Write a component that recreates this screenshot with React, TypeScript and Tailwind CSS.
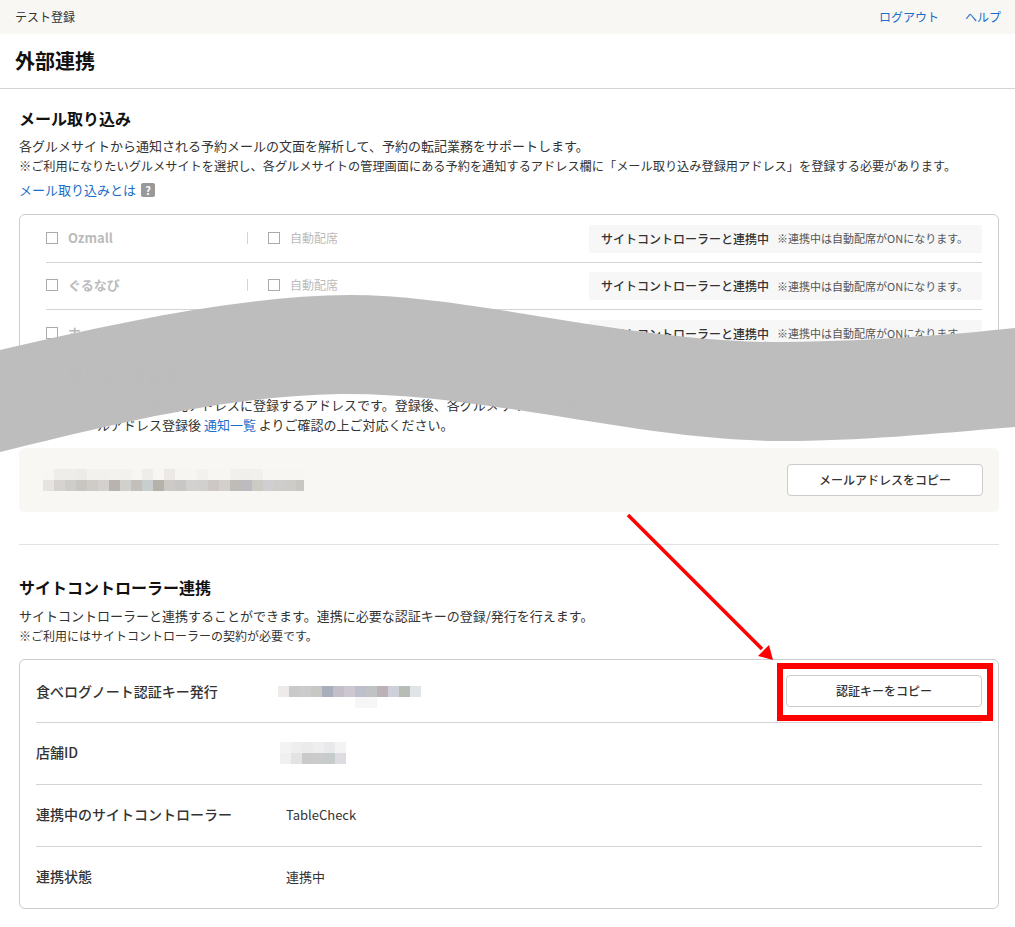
import type { ReactNode } from 'react'

const siteRows = ['Ozmall', 'ぐるなび', 'ホットペッパー']

const mailMosaic = [
  ['#f7f6f3', '#efedea', '#efedea', '#edebe7', '#f2f1ee', '#f2f1ee', '#f3f2ef', '#f2f1ee', '#f7f6f3', '#eeede9', '#f7f6f3', '#ebe8e5', '#f6f5f2', '#f6f5f2', '#f2f1ee', '#f7f6f3', '#f7f6f3', '#f2f0ed', '#f1efec', '#f1f0ed', '#f7f6f3', '#f7f6f3', '#f7f6f3', '#f7f6f3'],
  ['#e6e4e1', '#d6d3d0', '#cfcdca', '#c9c5c1', '#cdccc7', '#d4d0cf', '#b8b3ae', '#d2d0cc', '#c3bfba', '#c9cdce', '#b5b1ab', '#cdc9c6', '#c9c7c6', '#d3d0ce', '#d2cfcf', '#cdc8c5', '#d3cfcd', '#bfbcb8', '#bdbbc0', '#cbcac5', '#d0ced0', '#cfcdcb', '#cdccc8', '#c8c8c3'],
]
const keyMosaic = [
  ['#eeeaea', '#c9c9c9', '#cccccc', '#c7c8c3', '#a9aebb', '#c3bec8', '#cbc8cf', '#bebfcc', '#c1c2c3', '#bcb1b6', '#cdd0d9', '#b7bcb6', '#e0e4e7'],
  ['#ffffff', '#ffffff', '#ffffff', '#ffffff', '#ffffff', '#ffffff', '#ffffff', '#f6f6f6', '#f6f6f6', '#ffffff', '#ffffff', '#ffffff', '#ffffff'],
]
const shopMosaic = [
  ['#f3f3f3', '#eeeeee', '#ebebeb', '#eeeeee', '#e9e9eb', '#f3f3f3'],
  ['#f0f0f0', '#e3e3e3', '#cbcacb', '#cbcbcb', '#c5cccb', '#dedce1'],
]

function Mosaic({ rows }: { rows: string[][] }) {
  return (
    <div className="flex flex-col">
      {rows.map((row, i) => (
        <div key={i} className="flex">
          {row.map((color, j) => (
            <div key={j} className="w-[11px] h-[11px] shrink-0" style={{ backgroundColor: color }} />
          ))}
        </div>
      ))}
    </div>
  )
}

function Checkbox() {
  return <span className="block w-[12px] h-[12px] border border-[#aaaaaa] bg-white shrink-0" />
}

function CopyButton({ label }: { label: string }) {
  return (
    <button className="w-[196px] h-[32px] bg-white border border-[#cccccc] rounded-[4px] text-[12px] font-medium text-[#333333]">
      {label}
    </button>
  )
}

function KeyRow({ label, className, children }: { label: string; className: string; children: ReactNode }) {
  return (
    <div className={className}>
      <div className="w-[242px] text-[14px] font-medium text-[#333333]">{label}</div>
      <div className="flex-1 flex items-center justify-between text-[13px] text-[#333333]">{children}</div>
    </div>
  )
}

export default function App() {
  return (
    <div className="relative min-h-[927px] bg-white overflow-hidden font-['Noto_Sans_CJK_JP','Noto_Sans',sans-serif] text-[#333333]">
      <header className="h-[34px] bg-[#f8f7f4] flex items-center justify-between pl-[15px] pr-[14px] text-[12px]">
        <span>テスト登録</span>
        <nav className="flex gap-[26px] text-[#1a6fc9]">
          <a>ログアウト</a>
          <a>ヘルプ</a>
        </nav>
      </header>

      <div className="h-[55px] flex items-center pl-[15px] border-b border-[#d4d4d4]">
        <h1 className="text-[20px] leading-[28px] font-bold text-[#111111]">外部連携</h1>
      </div>

      <main className="pl-[19px] pr-[16px] pt-[19px] pb-[18px]">
        {/* Mail import */}
        <section>
          <h2 className="text-[16px] leading-[20px] font-bold text-[#111111]">メール取り込み</h2>
          <p className="mt-[8px] text-[13px] leading-[20px]">
            各グルメサイトから通知される予約メールの文面を解析して、予約の転記業務をサポートします。
            <br />
            <span className="text-[12.2px]">
              ※ご利用になりたいグルメサイトを選択し、各グルメサイトの管理画面にある予約を通知するアドレス欄に「メール取り込み登録用アドレス」を登録する必要があります。
            </span>
          </p>
          <div className="mt-[4px] flex items-center gap-[5px] h-[20px]">
            <a className="text-[13px] text-[#1a6fc9]">メール取り込みとは</a>
            <span className="w-[14px] h-[14px] rounded-[2px] bg-[#999999] text-white text-[11px] font-bold leading-[14px] text-center">?</span>
          </div>

          <div className="mt-[14px] border border-[#cccccc] rounded-[6px] pl-[26px] pr-[16px]">
            {siteRows.map((name, i) => (
              <div
                key={name}
                className={
                  i === 0
                    ? 'flex items-center h-[48px] border-b border-[#d4d4d4]'
                    : i === 1
                      ? 'flex items-center h-[47px] border-b border-[#d4d4d4]'
                      : 'flex items-center h-[47px]'
                }
              >
                <div className="w-[202px] -mt-[2px] flex items-center gap-[10px] border-r border-[#d4d4d4] h-[12px]">
                  <Checkbox />
                  <span className="text-[13px] font-bold text-[#bbbbbb]">{name}</span>
                </div>
                <div className="ml-[20px] -mt-[2px] flex items-center gap-[10px]">
                  <Checkbox />
                  <span className="text-[12px] text-[#bbbbbb]">自動配席</span>
                </div>
                <div className="ml-auto w-[393px] h-[28px] bg-[#f7f7f7] rounded-[2px] flex items-center pl-[12px] gap-[8px]">
                  <span className="text-[12px] font-medium">サイトコントローラーと連携中</span>
                  <span className="text-[11px] text-[#555555]">※連携中は自動配席がONになります。</span>
                </div>
              </div>
            ))}
          </div>

          <h3 className="mt-[7px] text-[16px] leading-[20px] font-bold text-[#111111]">メール取り込み登録用アドレス</h3>
          <p className="mt-[10px] text-[13px] leading-[20px]">
            各グルメサイトの予約通知先アドレスに登録するアドレスです。登録後、各グルメサイトから確認メールが届きます。
            <br />
            ※確認用メールアドレス登録後 <a className="text-[#1a6fc9]">通知一覧</a> よりご確認の上ご対応ください。
          </p>

          <div className="mt-[13px] h-[64px] bg-[#f8f7f4] rounded-[6px] flex items-center justify-between pl-[24px] pr-[16px]">
            <div className="w-[261px] overflow-hidden">
              <Mosaic rows={mailMosaic} />
            </div>
            <CopyButton label="メールアドレスをコピー" />
          </div>
        </section>

        <hr className="mt-[32px] border-0 border-t border-[#e2e2e2]" />

        {/* Site controller */}
        <section className="mt-[32px]">
          <h2 className="text-[16px] leading-[20px] font-bold text-[#111111]">サイトコントローラー連携</h2>
          <p className="mt-[9px] text-[13px] leading-[20px]">
            サイトコントローラーと連携することができます。連携に必要な認証キーの登録/発行を行えます。
            <br />
            <span className="text-[12px]">※ご利用にはサイトコントローラーの契約が必要です。</span>
          </p>

          <div className="mt-[13px] border border-[#cccccc] rounded-[6px] px-[16px]">
            <KeyRow label="食べログノート認証キー発行" className="flex items-center h-[63px] border-b border-[#d4d4d4]">
              <div className="pt-[11px]">
                <Mosaic rows={keyMosaic} />
              </div>
              <CopyButton label="認証キーをコピー" />
            </KeyRow>
            <KeyRow label="店舗ID" className="flex items-center h-[62px] pb-[2px] border-b border-[#d4d4d4]">
              <div className="pl-[2px]">
                <Mosaic rows={shopMosaic} />
              </div>
            </KeyRow>
            <KeyRow label="連携中のサイトコントローラー" className="flex items-center h-[62px] pb-[2px] border-b border-[#d4d4d4]">
              <span className="pl-[8px]">TableCheck</span>
            </KeyRow>
            <KeyRow label="連携状態" className="flex items-center h-[61px] pb-[2px]">
              <span className="pl-[8px]">連携中</span>
            </KeyRow>
          </div>
        </section>
      </main>

      {/* annotations drawn over the capture */}
      <svg className="absolute inset-0 pointer-events-none" width="1015" height="927" viewBox="0 0 1015 927">
        <path
          d="M0 350C120 322 240 296 350 295C470 295 620 340 770 342C860 342 950 335 1015 328L1015 427C930 434 860 441 780 441C640 441 480 392 340 394C220 396 100 428 0 452Z"
          fill="#bdbdbd"
          fillOpacity="0.995"
        />
        <line x1="628" y1="515" x2="762" y2="649" stroke="#ff0000" strokeWidth="3.5" />
        <polygon points="773,660 758,656 769,645" fill="#ff0000" />
      </svg>
      <div className="absolute left-[777px] top-[663px] w-[216px] h-[58px] border-[6px] border-[#ff0000] pointer-events-none" />
    </div>
  )
}
